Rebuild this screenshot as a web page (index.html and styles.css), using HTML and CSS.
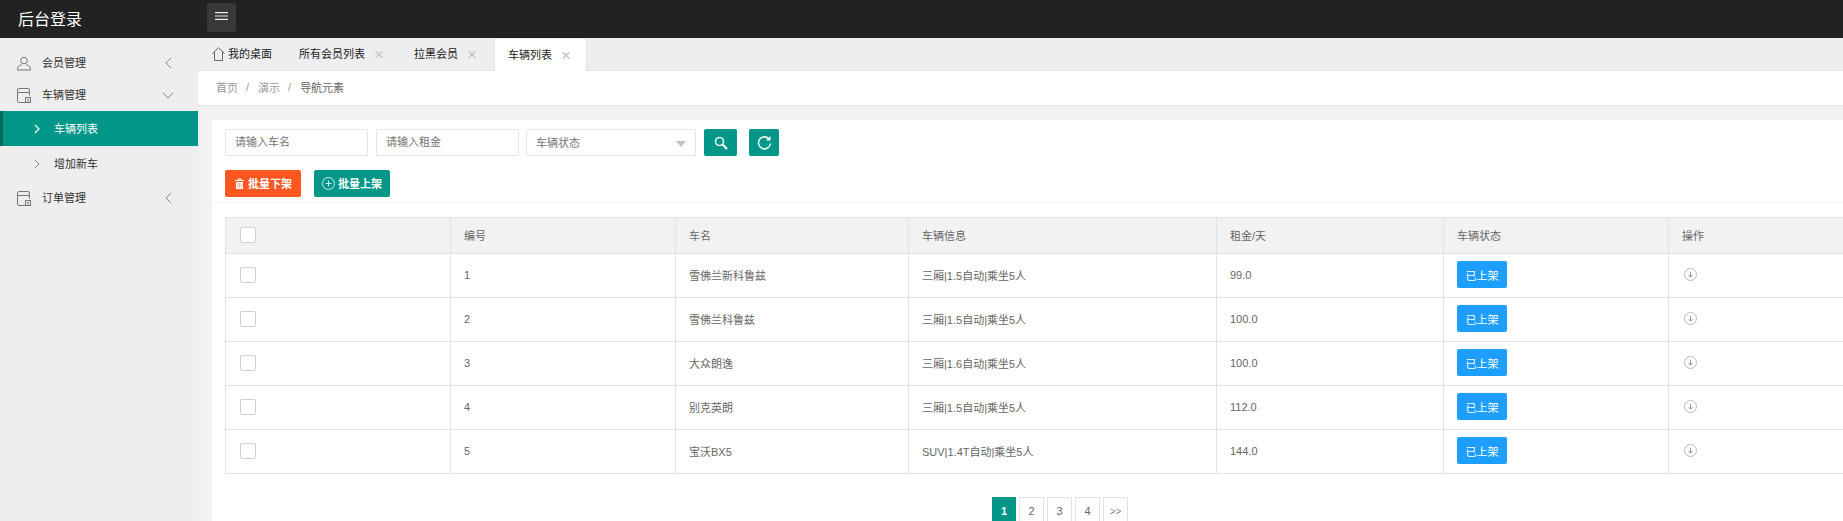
FILE: index.html
```html
<!DOCTYPE html>
<html lang="zh-CN">
<head>
    <meta charset="UTF-8">
    <meta name="viewport" content="width=device-width, initial-scale=1.0">
    <title>后台登录</title>
    <link rel="stylesheet" href="styles.css">
</head>
<body>
    <svg class="icon-defs" xmlns="http://www.w3.org/2000/svg">
        <symbol id="i-doc" viewBox="0 0 14 15">
            <path d="M12.500 7.500V2a1.500 1.500 0 0 0-1.500-1.500H2A1.500 1.500 0 0 0 .5 2v11A1.500 1.500 0 0 0 2 14.500h6M.5 4.500h12" fill="none" stroke="currentColor"/>
            <rect x="8.500" y="9.500" width="5" height="5" fill="none" stroke="currentColor"/>
            <path d="M10 11.500h2M10 13h2" stroke="currentColor" stroke-width=".8"/>
        </symbol>
        <symbol id="i-down" viewBox="0 0 13 13">
            <circle cx="6.500" cy="6.500" r="6" fill="none" stroke="#bbb"/>
            <path d="M6.500 3.500v5.500" stroke="#999"/>
            <path d="M4.600 7.200l1.900 1.900 1.900-1.900" fill="none" stroke="#b08a70"/>
        </symbol>
    </svg>

    <header class="topbar">
        <div class="logo">后台登录</div>
        <button class="menu-btn">
            <svg width="13" height="8" viewBox="0 0 13 8"><path d="M0 .6h13M0 4h13M0 7.400h13" stroke="#eee" stroke-width="1.200"/></svg>
        </button>
    </header>

    <div class="layout">
        <aside class="sidebar">
            <a class="nav-item">
                <svg class="nav-icon" viewBox="0 0 14 14"><circle cx="7" cy="4" r="3.300" fill="none" stroke="currentColor"/><path d="M.5 13.500v-1.800c0-1.800 2.500-3 4.300-3.200M13.500 13.500v-1.800c0-1.800-2.500-3-4.300-3.200M.5 13.500h13" fill="none" stroke="currentColor"/></svg>
                <span>会员管理</span>
                <svg class="nav-arrow" viewBox="0 0 7 12"><path d="M6 1L1 6l5 5" fill="none" stroke="currentColor"/></svg>
            </a>
            <a class="nav-item">
                <svg class="nav-icon"><use href="#i-doc"/></svg>
                <span>车辆管理</span>
                <svg class="nav-arrow nav-arrow-open" viewBox="0 0 12 7"><path d="M1 1l5 5 5-5" fill="none" stroke="currentColor"/></svg>
            </a>
            <a class="sub-item active">
                <svg class="sub-arrow" viewBox="0 0 6 10"><path d="M1 1l4 4-4 4" fill="none" stroke="currentColor" stroke-width="1.200"/></svg>
                <span>车辆列表</span>
            </a>
            <a class="sub-item">
                <svg class="sub-arrow" viewBox="0 0 6 10"><path d="M1 1l4 4-4 4" fill="none" stroke="currentColor"/></svg>
                <span>增加新车</span>
            </a>
            <a class="nav-item">
                <svg class="nav-icon"><use href="#i-doc"/></svg>
                <span>订单管理</span>
                <svg class="nav-arrow" viewBox="0 0 7 12"><path d="M6 1L1 6l5 5" fill="none" stroke="currentColor"/></svg>
            </a>
        </aside>

        <main class="main">
            <div class="tabs">
                <div class="tab tab-home">
                    <svg class="home-icon" viewBox="0 0 13 14"><path d="M.5 6.500L6.500.7l6 5.800M2.500 5v8.500h8V5" fill="none" stroke="currentColor"/></svg>
                    <span>我的桌面</span>
                </div>
                <div class="tab tab-all"><span>所有会员列表</span><i class="tab-close">&times;</i></div>
                <div class="tab tab-black"><span>拉黑会员</span><i class="tab-close">&times;</i></div>
                <div class="tab tab-active"><span>车辆列表</span><i class="tab-close">&times;</i></div>
            </div>

            <div class="crumbs">
                <span>首页</span><em>/</em><span>演示</span><em>/</em><span class="crumb-now">导航元素</span>
            </div>

            <div class="content">
                <section class="card">
                    <div class="search-row">
                        <input class="field" type="text" placeholder="请输入车名">
                        <input class="field" type="text" placeholder="请输入租金">
                        <div class="field field-select"><span>车辆状态</span><span class="select-caret"></span></div>
                        <button class="btn btn-search">
                            <svg width="14" height="14" viewBox="0 0 14 14"><circle cx="5.500" cy="5.500" r="4" fill="none" stroke="#dff3f1" stroke-width="1.600"/><path d="M8.500 8.500l4.500 4.500" stroke="#fff" stroke-width="2"/></svg>
                        </button>
                        <button class="btn btn-reload">
                            <svg width="15" height="16" viewBox="0 0 15 16"><path d="M12.500 4.500a6 6 0 1 0 1 4" fill="none" stroke="#e6f6f4" stroke-width="1.600"/><path d="M13.500 1v4.500H9z" fill="#fff"/></svg>
                        </button>
                    </div>

                    <div class="tool-row">
                        <button class="btn btn-down">
                            <svg width="11" height="11" viewBox="0 0 11 11"><path d="M1 2.500h9M4 2.500V1h3v1.500" fill="none" stroke="#fff"/><path d="M2 4h7v7H2z" fill="#fff"/><path d="M4 5v5M5.500 5v5M7 5v5" stroke="#ff8a60" stroke-width=".6"/></svg>
                            批量下架
                        </button>
                        <button class="btn btn-up">
                            <svg width="13" height="13" viewBox="0 0 13 13"><circle cx="6.500" cy="6.500" r="6" fill="none" stroke="#d5efec"/><path d="M3.500 6.500h6M6.500 3.500v6" stroke="#d5efec"/></svg>
                            批量上架
                        </button>
                    </div>

                    <div class="table-wrap">
                        <table class="car-table">
                            <colgroup>
                                <col class="col-check"><col class="col-no"><col class="col-name"><col class="col-info"><col class="col-rent"><col class="col-state"><col class="col-op">
                            </colgroup>
                            <thead>
                                <tr>
                                    <th><span class="check"></span></th>
                                    <th>编号</th><th>车名</th><th>车辆信息</th><th>租金/天</th><th>车辆状态</th><th>操作</th>
                                </tr>
                            </thead>
                            <tbody>
                                <tr>
                                    <td><span class="check"></span></td><td>1</td><td>雪佛兰新科鲁兹</td><td>三厢|1.5自动|乘坐5人</td><td>99.0</td>
                                    <td><button class="btn-state">已上架</button></td><td><svg class="op-icon"><use href="#i-down"/></svg></td>
                                </tr>
                                <tr>
                                    <td><span class="check"></span></td><td>2</td><td>雪佛兰科鲁兹</td><td>三厢|1.5自动|乘坐5人</td><td>100.0</td>
                                    <td><button class="btn-state">已上架</button></td><td><svg class="op-icon"><use href="#i-down"/></svg></td>
                                </tr>
                                <tr>
                                    <td><span class="check"></span></td><td>3</td><td>大众朗逸</td><td>三厢|1.6自动|乘坐5人</td><td>100.0</td>
                                    <td><button class="btn-state">已上架</button></td><td><svg class="op-icon"><use href="#i-down"/></svg></td>
                                </tr>
                                <tr>
                                    <td><span class="check"></span></td><td>4</td><td>别克英朗</td><td>三厢|1.5自动|乘坐5人</td><td>112.0</td>
                                    <td><button class="btn-state">已上架</button></td><td><svg class="op-icon"><use href="#i-down"/></svg></td>
                                </tr>
                                <tr>
                                    <td><span class="check"></span></td><td>5</td><td>宝沃BX5</td><td>SUV|1.4T自动|乘坐5人</td><td>144.0</td>
                                    <td><button class="btn-state">已上架</button></td><td><svg class="op-icon"><use href="#i-down"/></svg></td>
                                </tr>
                            </tbody>
                        </table>
                    </div>

                    <div class="pager">
                        <a class="page page-on">1</a>
                        <a class="page">2</a>
                        <a class="page">3</a>
                        <a class="page">4</a>
                        <a class="page page-next">&gt;&gt;</a>
                    </div>
                </section>
            </div>
        </main>
    </div>
</body>
</html>
```

FILE: styles.css
```css
* {
    margin: 0;
    padding: 0;
    box-sizing: border-box;
}

html,
body {
    height: 100%;
    overflow: hidden;
}

body {
    font-family: "Liberation Sans", "Noto Sans CJK SC", sans-serif;
    font-size: 11px;
    color: #666;
    background: #f1f1f1;
    display: flex;
    flex-direction: column;
}

.icon-defs {
    display: none;
}

button {
    font-family: inherit;
    border: none;
}

/* top bar */
.topbar {
    height: 38px;
    flex: none;
    background: #222;
    display: flex;
    align-items: center;
}

.logo {
    width: 207px;
    padding-left: 18px;
    padding-bottom: 2px;
    font-size: 16px;
    color: #fff;
}

.menu-btn {
    width: 29px;
    height: 29px;
    margin-top: -3px;
    padding-bottom: 3px;
    background: #393939;
    border-radius: 3px;
    display: flex;
    align-items: center;
    justify-content: center;
}

.layout {
    flex: 1;
    display: flex;
    min-height: 0;
}

/* side menu */
.sidebar {
    width: 198px;
    flex: none;
    padding-top: 9px;
    background: #eee;
    color: #333;
}

.nav-item {
    height: 32px;
    padding-left: 17px;
    display: flex;
    align-items: center;
}

.nav-item span,
.sub-item span,
.tab span,
.crumbs span,
.crumbs em,
.field-select span:first-child {
    margin-bottom: 2px;
}

.nav-icon {
    width: 14px;
    height: 15px;
    margin-right: 11px;
    color: #777;
}

.nav-arrow {
    width: 7px;
    height: 12px;
    margin-left: auto;
    margin-right: 26px;
    color: #888;
}

.nav-arrow-open {
    width: 12px;
    height: 7px;
    margin-right: 24px;
}

.sub-item {
    height: 36px;
    padding-left: 34px;
    display: flex;
    align-items: center;
}

.sub-item.active {
    height: 35px;
    background: #009688;
    border-left: 3px solid #00695c;
    padding-left: 31px;
    color: #fff;
}

.sub-arrow {
    width: 6px;
    height: 10px;
    margin-right: 14px;
    color: #888;
}

.active .sub-arrow {
    color: #fff;
}

/* tabs */
.main {
    flex: 1;
    min-width: 0;
    display: flex;
    flex-direction: column;
}

.tabs {
    height: 33px;
    flex: none;
    background: #eeeef0;
    border-bottom: 1px solid #e2e2e2;
    display: flex;
    color: #222;
}

.tab {
    padding-left: 13px;
    display: flex;
    align-items: center;
}

.tab-home {
    padding-left: 14px;
    width: 88px;
}

.home-icon {
    width: 13px;
    height: 14px;
    margin-right: 3px;
    color: #666;
}

.tab-all {
    width: 115px;
}

.tab-black {
    width: 93px;
}

.tab-active {
    width: 93px;
    height: 32px;
    margin-top: 1px;
    background: #fff;
    border-right: 1px solid #e2e2e2;
    border-left: 1px solid #e8e8e8;
}

.tab-close {
    margin-left: 9px;
    font-style: normal;
    font-size: 17px;
    line-height: 1;
    color: #c2c2c2;
}

.crumbs {
    height: 35px;
    flex: none;
    padding-left: 18px;
    background: #fff;
    border-bottom: 1px solid #e6e6e6;
    display: flex;
    align-items: center;
    color: #999;
}

.crumbs em {
    font-style: normal;
    margin-left: 8px;
    margin-right: 9px;
}

.crumb-now {
    color: #666;
}

/* main card */
.content {
    flex: 1;
    min-height: 0;
    padding: 14px 0 0 14px;
}

.card {
    height: 100%;
    background: #fff;
    border-radius: 2px 0 0 0;
    padding-top: 9px;
}

.search-row {
    height: 27px;
    margin-left: 13px;
    display: flex;
}

.field {
    width: 143px;
    height: 27px;
    margin-right: 8px;
    padding: 0 0 2px 9px;
    border: 1px solid #e6e6e6;
    border-radius: 2px;
    font-family: inherit;
    font-size: 11px;
    color: #757575;
    outline: none;
}

.field::placeholder {
    color: #757575;
}

.field-select {
    width: 170px;
    margin-left: -1px;
    margin-right: 8px;
    padding-bottom: 0;
    display: flex;
    align-items: center;
    position: relative;
}

.select-caret {
    position: absolute;
    right: 9px;
    top: 11px;
    border: 5px solid transparent;
    border-top: 6px solid #c2c2c2;
    border-bottom: 0;
}

.btn {
    height: 27px;
    border-radius: 2px;
    color: #fff;
    font-size: 11px;
    display: flex;
    align-items: center;
    justify-content: center;
}

.btn-search {
    width: 33px;
    margin-right: 12px;
    background: #009688;
}

.btn-reload {
    width: 30px;
    background: #009688;
}

.tool-row {
    margin-top: 14px;
    padding: 0 0 5px 13px;
    border-bottom: 1px solid #f6f6f6;
    display: flex;
    gap: 13px;
}

.btn-down,
.btn-up {
    width: 76px;
    gap: 3px;
    font-weight: bold;
    padding-bottom: 1px;
}

.btn-down {
    background: #ff5722;
}

.btn-up {
    background: #009688;
}

/* table */
.table-wrap {
    margin: 14px 0 0 13px;
}

.car-table {
    width: 1668px;
    table-layout: fixed;
    border-collapse: collapse;
}

.col-check { width: 225px; }
.col-no { width: 225px; }
.col-name { width: 233px; }
.col-info { width: 308px; }
.col-rent { width: 227px; }
.col-state { width: 225px; }
.col-op { width: 225px; }

.car-table th,
.car-table td {
    border: 1px solid #e2e2e2;
    padding: 0 13px 2px;
    text-align: left;
    font-weight: normal;
    color: #666;
}

.car-table th {
    height: 36px;
    background: #f2f2f2;
}

.car-table td {
    height: 44px;
}

.check {
    display: block;
    width: 16px;
    height: 16px;
    margin-left: 1px;
    background: #fff;
    border: 1px solid #d2d2d2;
    border-radius: 2px;
}

.btn-state {
    display: block;
    width: 50px;
    height: 27px;
    background: #1e9fff;
    border-radius: 2px;
    color: #fff;
    font-size: 11px;
}

.op-icon {
    display: block;
    width: 13px;
    height: 13px;
    margin-left: 2px;
}

/* pager */
.pager {
    margin: 23px 0 0 780px;
    display: flex;
    gap: 3px;
}

.page {
    width: 25px;
    height: 28px;
    flex: none;
    border: 1px solid #e2e2e2;
    display: flex;
    align-items: center;
    justify-content: center;
    font-size: 11px;
    color: #666;
}

.page-on {
    width: 24px;
    background: #009688;
    border-color: #009688;
    color: #fff;
    font-weight: bold;
}

.page-next {
    font-size: 10px;
    color: #888;
}
```
